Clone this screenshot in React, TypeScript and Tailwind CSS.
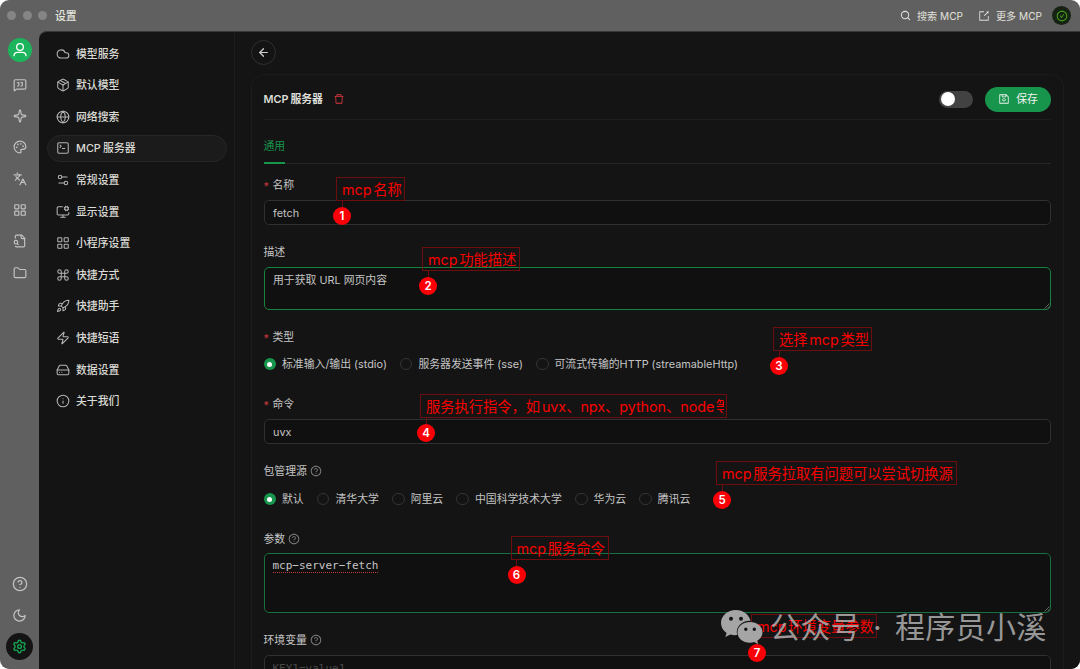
import type { ComponentType, ReactNode } from 'react';
import {
  ArrowLeft,
  CircleHelp,
  Cloud,
  Command,
  Folder,
  Globe,
  HardDrive,
  Info,
  Languages,
  LayoutGrid,
  MessageSquareQuote,
  MonitorCog,
  Package,
  Palette,
  Rocket,
  Search,
  Settings,
  Settings2,
  Sparkle,
  SquareTerminal,
  Zap,
} from 'lucide-react';
import {
  AiOutlineCheckCircle,
  AiOutlineDelete,
  AiOutlineExport,
  AiOutlineQuestionCircle,
  AiOutlineSave,
} from 'react-icons/ai';

type Icon = ComponentType<{ className?: string; strokeWidth?: number | string }>;

function FileSearch({ className, strokeWidth }: { className?: string; strokeWidth?: number | string }) {
  return (
    <svg
      viewBox="0 0 24 24"
      className={className}
      fill="none"
      stroke="currentColor"
      strokeWidth={strokeWidth}
      strokeLinecap="round"
      strokeLinejoin="round"
    >
      <path d="M14 2v4a2 2 0 0 0 2 2h4" />
      <path d="M4.268 21a2 2 0 0 0 1.727 1H18a2 2 0 0 0 2-2V7l-5-5H6a2 2 0 0 0-2 2v3" />
      <path d="m9 18-1.5-1.5" />
      <circle cx="5" cy="14" r="3" />
    </svg>
  );
}

const railIcons: Icon[] = [MessageSquareQuote, Sparkle, Palette, Languages, LayoutGrid, FileSearch, Folder];

const menuItems: { icon: Icon; label: string; active?: boolean }[] = [
  { icon: Cloud, label: '模型服务' },
  { icon: Package, label: '默认模型' },
  { icon: Globe, label: '网络搜索' },
  { icon: SquareTerminal, label: 'MCP 服务器', active: true },
  { icon: Settings2, label: '常规设置' },
  { icon: MonitorCog, label: '显示设置' },
  { icon: LayoutGrid, label: '小程序设置' },
  { icon: Command, label: '快捷方式' },
  { icon: Rocket, label: '快捷助手' },
  { icon: Zap, label: '快捷短语' },
  { icon: HardDrive, label: '数据设置' },
  { icon: Info, label: '关于我们' },
];

const notes = [
  { id: 1, text: 'mcp 名称', x: 336, y: 176.5, width: 69 },
  { id: 2, text: 'mcp 功能描述', x: 422, y: 247, width: 98 },
  { id: 3, text: '选择 mcp 类型', x: 773, y: 327, width: 99 },
  { id: 4, text: '服务执行指令，如 uvx、npx、python、node 等', x: 420, y: 394, width: 307 },
  { id: 5, text: 'mcp 服务拉取有问题可以尝试切换源', x: 716, y: 461, width: 241 },
  { id: 6, text: 'mcp 服务命令', x: 510.5, y: 536, width: 98 },
  { id: 7, text: 'mcp 环境变量参数', x: 751, y: 614, width: 126 },
];

function TitleBar() {
  return (
    <header className="flex h-[31px] shrink-0 items-center pl-[7px] pr-[9px]">
      <div className="flex gap-[6.5px]">
        <span className="size-[9px] rounded-full bg-[#858585]" />
        <span className="size-[9px] rounded-full bg-[#858585]" />
        <span className="size-[9px] rounded-full bg-[#858585]" />
      </div>
      <span className="ml-2 font-medium text-[#e6e6df]">设置</span>
      <div className="ml-auto flex items-center text-[10.1px] text-[#e0e0dc]">
        <Search className="mr-1.5 size-[11px]" strokeWidth={2.2} />
        <span className="w-[46px] whitespace-nowrap">搜索 MCP</span>
        <AiOutlineExport className="ml-[15px] mr-1.5 size-3" />
        <span className="w-[46px] whitespace-nowrap">更多 MCP</span>
        <span className="ml-[10px] flex size-[19px] items-center justify-center rounded-full bg-[#162312]">
          <AiOutlineCheckCircle className="size-3 text-[#49aa19]" />
        </span>
      </div>
    </header>
  );
}

function Rail() {
  return (
    <nav className="flex w-[39px] shrink-0 flex-col items-center pb-[9.5px] pt-[6.5px] text-[#c2c2c2]">
      <span className="flex size-6 items-center justify-center rounded-full bg-[#1cb45c] text-white">
        <svg viewBox="0 0 24 24" className="size-4" fill="none" stroke="currentColor" strokeWidth="2">
          <circle cx="12" cy="7.5" r="5" />
          <path d="M3 21.5v-1a5 5 0 0 1 5-5h8a5 5 0 0 1 5 5v1" />
        </svg>
      </span>
      <div className="mt-[16px] flex flex-col gap-[17.4px]">
        {railIcons.map((RailIcon, i) => (
          <RailIcon key={i} className="size-[14px]" strokeWidth={2} />
        ))}
      </div>
      <CircleHelp className="mt-auto size-[16px]" strokeWidth={1.9} />
      <svg
        viewBox="0 0 24 24"
        className="mt-[16px] size-[15px]"
        fill="none"
        stroke="currentColor"
        strokeWidth="2"
        strokeLinejoin="round"
      >
        <path d="M12 3a6 6 0 0 0 9 9 9 9 0 1 1-9-9Z" />
      </svg>
      <span className="mt-[10px] flex size-[27px] items-center justify-center rounded-full bg-[#141414]">
        <Settings className="size-[15px] text-[#17a653]" strokeWidth={2.2} />
      </span>
    </nav>
  );
}

function SettingsMenu() {
  return (
    <aside className="flex w-[196px] shrink-0 flex-col gap-1 border-r border-[#1d1d1d] pl-2 pr-[7px] pt-[7.8px]">
      {menuItems.map(({ icon: ItemIcon, label, active }) => (
        <div
          key={label}
          className={`flex h-[27.62px] shrink-0 items-center gap-[6px] rounded-full border pl-2 font-medium text-[#dadad4] [word-spacing:-0.6px] ${
            active ? 'border-[#272727] bg-[#1b1b1b]' : 'border-transparent'
          }`}
        >
          <ItemIcon className="size-[14px] text-[#b4b4b4]" strokeWidth={1.8} />
          <span>{label}</span>
        </div>
      ))}
    </aside>
  );
}

function Label({ children, required, help }: { children: ReactNode; required?: boolean; help?: boolean }) {
  return (
    <div className="flex h-4 items-center pt-[0.5px]">
      {required && <span className="mr-[3.5px] pt-0.5 leading-none text-[#c5363a]">*</span>}
      {children}
      {help && <AiOutlineQuestionCircle className="ml-[3px] size-3 text-[#828282]" />}
    </div>
  );
}

function Radio({ children, checked }: { children: ReactNode; checked?: boolean }) {
  return (
    <label className="flex items-center gap-1.5 whitespace-nowrap">
      {checked ? (
        <span className="flex size-[12.5px] items-center justify-center rounded-full bg-[#17954c]">
          <span className="size-[5px] rounded-full bg-white" />
        </span>
      ) : (
        <span className="size-[12.5px] rounded-full border border-[#343434]" />
      )}
      {children}
    </label>
  );
}

// diagonal grip in the lower right corner of a textarea
function Grip() {
  return (
    <svg viewBox="0 0 6 6" className="absolute bottom-0 right-0 size-1.5" stroke="#8a8a8a" strokeWidth="0.7">
      <path d="M0.5 5.5 5.5 0.5M3.3 5.5 5.5 3.3" />
    </svg>
  );
}

function ServerForm() {
  return (
    <section className="mt-[9.5px] h-[700px] rounded-[13px] border border-[#1c1c1c] px-3">
      <div className="flex h-[45px] items-center border-b border-[#1d1d1d] pt-1">
        <span className="font-semibold text-[#deded8] [word-spacing:-0.8px]">MCP 服务器</span>
        <AiOutlineDelete className="ml-[10.5px] size-3 text-[#d9363e]" />
        <span className="ml-auto flex h-[17px] w-[34px] items-center rounded-full bg-[#424242] px-[1.5px]">
          <span className="size-[14px] rounded-full bg-white" />
        </span>
        <button className="ml-3 flex h-[25px] w-[66px] items-center justify-center gap-[6px] rounded-full bg-[#17954c] text-[#f2f2f2]">
          <AiOutlineSave className="size-3" />
          保存
        </button>
      </div>

      <div className="flex h-[44px] border-b border-[#262626]">
        <span className="-mb-px flex items-center border-b-2 border-[#17954c] pt-2.5 text-[#17954c]">通用</span>
      </div>

      <div className="pt-[13px]">
        <Label required>名称</Label>
        <div className="mt-[7px] flex h-[25px] items-center rounded-[5px] border border-[#303030] bg-[#101010] px-[8.5px]">
          fetch
        </div>
      </div>

      <div className="pt-[19px]">
        <Label>描述</Label>
        <div className="relative mt-[7px] h-[43px] rounded-[5px] border border-[#17813f] bg-[#101010] px-[8.5px] pt-1 leading-[17px]">
          用于获取 URL 网页内容
          <Grip />
        </div>
      </div>

      <div className="pt-[19px]">
        <Label required>类型</Label>
        <div className="mt-[7px] flex h-6 items-center gap-[13px]">
          <Radio checked>标准输入/输出 (stdio)</Radio>
          <Radio>服务器发送事件 (sse)</Radio>
          <Radio>可流式传输的HTTP (streamableHttp)</Radio>
        </div>
      </div>

      <div className="pt-[20px]">
        <Label required>命令</Label>
        <div className="mt-[7px] flex h-[25px] items-center rounded-[5px] border border-[#303030] bg-[#101010] px-[8.5px]">
          uvx
        </div>
      </div>

      <div className="pt-[19px]">
        <Label help>包管理源</Label>
        <div className="mt-[8px] flex h-6 items-center gap-[13.3px]">
          <Radio checked>默认</Radio>
          <Radio>清华大学</Radio>
          <Radio>阿里云</Radio>
          <Radio>中国科学技术大学</Radio>
          <Radio>华为云</Radio>
          <Radio>腾讯云</Radio>
        </div>
      </div>

      <div className="pt-[20px]">
        <Label help>参数</Label>
        <div className="relative mt-[6px] h-[60px] rounded-[5px] border border-[#17713e] bg-[#101010] px-2 pt-1 font-['DejaVu_Sans_Mono',monospace] text-[11px] leading-[16px]">
          <span className="border-b border-dotted border-[#c23a3a]">mcp−server−fetch</span>
          <Grip />
        </div>
      </div>

      <div className="pt-[19px]">
        <Label help>环境变量</Label>
        <div className="mt-[7px] h-[60px] rounded-[5px] border border-[#303030] bg-[#101010] px-2 pt-1 font-['DejaVu_Sans_Mono',monospace] text-[11px] leading-[17px] text-[#484848]">
          KEY1=value1
        </div>
      </div>
    </section>
  );
}

function Notes() {
  return (
    <>
      {notes.map(note => (
        <div key={note.id} className="absolute" style={{ left: note.x, top: note.y, width: note.width }}>
          <div className="h-6 border border-[#6c0d10] pl-[5px] pr-0.5 text-[14.3px] leading-[23px] text-[#f80000]">
            <div className="h-full overflow-hidden whitespace-nowrap tracking-[-0.03px] [word-spacing:-2.2px]">
              {note.text}
            </div>
          </div>
          <div className="ml-[5.5px] h-1.5 w-px bg-[#6c0d10]" />
          <div className="-ml-[3px] flex size-[18px] items-center justify-center rounded-full bg-[#fc0008] text-[11.5px] font-semibold text-white">
            {note.id}
          </div>
        </div>
      ))}
    </>
  );
}

function Watermark() {
  return (
    <div className="absolute left-[721px] top-[604.5px] flex h-11 items-center whitespace-nowrap text-[#b0b0b0]/85">
      <svg viewBox="0 0 42 34" className="h-[34px] w-[42px]" fill="#a5a5a5">
        <path
          fillRule="evenodd"
          d="M15 0C6.500 0 0 5.700 0 13c0 4.100 2.200 7.600 5.600 10L4.300 27l5-2.500c2.200.7 4.500.9 6.900.6C14 17 21 10.500 29.500 10.800 28 4.500 22 0 15 0ZM10 6.800a2 2 0 1 1 0 4 2 2 0 0 1 0-4Zm10 0a2 2 0 1 1 0 4 2 2 0 0 1 0-4Z"
        />
        <path
          fillRule="evenodd"
          d="M29 12c-7.200 0-12.500 4.700-12.500 10.400S21.800 32.700 29 32.700c1.500 0 2.900-.2 4.200-.6l4 2.100-1.100-3.500c3.200-2 5.400-4.900 5.400-8.300C41.500 16.700 36 12 29 12Zm-4.200 5.500a1.700 1.700 0 1 1 0 3.400 1.700 1.700 0 0 1 0-3.400Zm8.500 0a1.700 1.700 0 1 1 0 3.400 1.700 1.700 0 0 1 0-3.400Z"
        />
      </svg>
      <span className="ml-[7px] w-[103px] text-[30px] tracking-[0.3px]">公众号</span>
      <span className="w-[22px] text-[30px]">·</span>
      <span className="text-[30px] tracking-[0.3px]">程序员小溪</span>
    </div>
  );
}

export default function App() {
  return (
    <div className="h-[669px] w-[1080px] overflow-hidden bg-white">
      <div className="relative flex h-full flex-col overflow-hidden rounded-[9px] bg-[#606060] font-['Inter','Noto_Sans_CJK_SC',sans-serif] text-[10.85px] leading-4 text-[#c4c4c4]">
        <TitleBar />
        <div className="flex min-h-0 flex-1">
          <Rail />
          <div className="flex min-w-0 flex-1 overflow-hidden rounded-tl-[8px] border-t border-[#393939] bg-[#141414]">
            <SettingsMenu />
            <main className="min-w-0 flex-1 overflow-hidden pl-[15.5px] pr-4 pt-[7.5px]">
              <button className="flex size-[25px] items-center justify-center rounded-full border border-[#303030] text-[#d0d0d0]">
                <ArrowLeft className="size-[13px] shrink-0" strokeWidth={2.2} />
              </button>
              <ServerForm />
            </main>
          </div>
        </div>
        <Notes />
        <Watermark />
      </div>
    </div>
  );
}
